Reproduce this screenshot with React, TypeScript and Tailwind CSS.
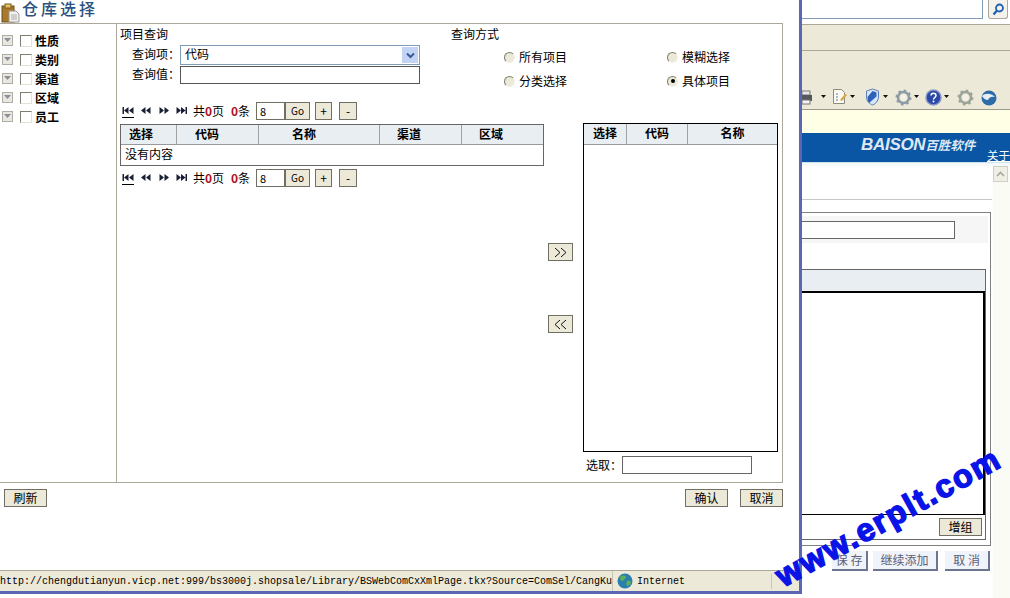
import React from "react";

const cjk = { fontFamily: '"Noto Sans CJK SC","Liberation Sans",sans-serif' };

function Btn({ children, className = "" }: { children: React.ReactNode; className?: string }) {
  return (
    <div className={`flex items-center justify-center border border-[#716f64] bg-[#ece9d8] text-[12px] leading-none text-black ${className}`}>
      {children}
    </div>
  );
}

function Tri({ d, line }: { d: string; line?: boolean }) {
  return (
    <svg width="12" height="14" viewBox="0 0 12 14" className="shrink-0">
      <path d={d} fill="#1a1f33" />
      {line && <path d="M0 13.500H12" stroke="#000" strokeWidth="1" />}
    </svg>
  );
}

function Pager() {
  return (
    <div className="flex h-[18px] items-center text-[12px] leading-none text-black">
      <div className="ml-[2px] flex w-[68px] gap-[6px]">
        <Tri line d="M0.500 3h1.500v7H0.500zM6.500 3v7L2 6.500zM11.500 3v7L7 6.500z" />
        <Tri d="M5.500 3v7L1 6.500zM10.500 3v7L6 6.500z" />
        <Tri d="M1.500 3v7L6 6.500zM6.500 3v7l4.500-3.500z" />
        <Tri d="M0.500 3v7L5 6.500zM5 3v7l4.500-3.500zM9.500 3H11v7H9.500z" />
      </div>
      <span className="ml-[3px] w-[38px] whitespace-nowrap pb-[1px]">
        共<b className="text-[#b01020]">0</b>页
      </span>
      <span className="w-[25px] whitespace-nowrap pb-[1px]">
        <b className="text-[#b01020]">0</b>条
      </span>
      <div className="flex h-[18px] w-[29px] items-center border border-[#716f64] bg-white pl-[3px] text-[11px]">8</div>
      <Btn className="h-[18px] w-[25px]"><span className="text-[10px]">Go</span></Btn>
      <Btn className="ml-[5px] h-[18px] w-[17px]">+</Btn>
      <Btn className="ml-[7px] h-[18px] w-[18px]">-</Btn>
    </div>
  );
}

function Radio({ checked, label }: { checked?: boolean; label: string }) {
  return (
    <div className="flex h-[12px] items-center gap-[4px] whitespace-nowrap text-[12px] text-black">
      <span className="flex h-[11px] w-[11px] items-center justify-center rounded-full border border-t-[#7f7d70] border-l-[#7f7d70] border-r-[#f4f2e8] border-b-[#f4f2e8] bg-[#ece9d8]">
        {checked && <span className="h-[4px] w-[4px] rounded-full bg-black" />}
      </span>
      {label}
    </div>
  );
}

function SideRow({ label }: { label: string }) {
  return (
    <div className="flex h-[19px] items-center">
      <div className="ml-[2px] flex h-[11px] w-[11px] items-center justify-center border border-[#b0aea4] bg-[#e8e8e0]">
        <svg width="7" height="5" viewBox="0 0 7 5"><path d="M0 0h7L3.500 4z" fill="#8a8f98" /></svg>
      </div>
      <div className="ml-[7px] h-[12px] w-[12px] border border-t-[#7f7d70] border-l-[#7f7d70] border-r-[#e4e2d6] border-b-[#e4e2d6] bg-white" />
      <span className="ml-[3px] text-[12px] font-bold leading-none text-black">{label}</span>
    </div>
  );
}

function HeadCell({ w, children, last, pad }: { w: string; children: string; last?: boolean; pad?: string }) {
  return (
    <div className={`flex h-full items-center pb-[2px] text-[12px] font-bold leading-none text-black ${pad ?? "justify-center"} ${w} ${last ? "" : "border-r border-[#a0a0a0]"}`}>
      {children}
    </div>
  );
}

function Gear({ color = "#8e9aa5" }: { color?: string }) {
  return (
    <svg width="17" height="17" viewBox="0 0 17 17">
      <circle cx="8.500" cy="8.500" r="5.500" fill="none" stroke={color} strokeWidth="2.500" />
      <circle cx="8.500" cy="8.500" r="7" fill="none" stroke={color} strokeWidth="2" strokeDasharray="2.500 3" />
      <circle cx="8.500" cy="8.500" r="3" fill="#f4f2e6" />
    </svg>
  );
}

function Caret() {
  return (
    <svg width="5" height="3" viewBox="0 0 5 3" className="mx-[2px]"><path d="M0 0h5L2.500 3z" fill="#111" /></svg>
  );
}

function Toolbar() {
  return (
    <div className="flex h-[59px] items-end border-b border-[#9c9a8d] bg-[#ece9d8] pb-[3px]">
      <svg width="10" height="15" viewBox="0 0 10 15" className="mb-[1px] shrink-0">
        <rect x="0" y="1" width="8" height="4" fill="#e8e8e8" stroke="#777" />
        <rect x="0" y="5" width="10" height="6" fill="#55585c" />
        <rect x="0" y="10" width="8" height="4" fill="#f4f4f4" stroke="#777" />
      </svg>
      <div className="mb-[8px] ml-[7px]"><Caret /></div>
      <svg width="16" height="17" viewBox="0 0 16 17" className="ml-[4px] mb-[1px]">
        <path d="M1.500 1.500h8l3 3v11h-11z" fill="#fbfaf0" stroke="#8a8a80" />
        <path d="M4 6h2M4 9h2M4 12h2" stroke="#5572b0" />
        <path d="M8 12l5-6 2 1-5 6z" fill="#d9a441" />
      </svg>
      <div className="mb-[8px]"><Caret /></div>
      <svg width="15" height="18" viewBox="0 0 15 18" className="ml-[8px]">
        <path d="M7.500 1l6 2v6c0 4-3 7-6 8-3-1-6-4-6-8V3z" fill="#d6e4f5" stroke="#5d7fb5" />
        <path d="M7.500 3l4 1.500v4L4 15c-1-1.500-1.500-3-1.500-6z" fill="#2e62b8" />
      </svg>
      <div className="mb-[8px] ml-[1px]"><Caret /></div>
      <div className="ml-[5px] flex"><Gear /></div>
      <div className="mb-[8px]"><Caret /></div>
      <svg width="17" height="17" viewBox="0 0 17 17" className="ml-[4px]">
        <circle cx="8.500" cy="8.500" r="7.500" fill="#2a48a8" stroke="#8796c4" strokeWidth="1.500" />
        <path d="M6 6.500c0-3 5-3 5 0 0 2-2.500 2-2.500 4" fill="none" stroke="#fff" strokeWidth="1.500" />
        <circle cx="8.500" cy="12.500" r="1" fill="#fff" />
      </svg>
      <div className="mb-[8px]"><Caret /></div>
      <div className="ml-[6px] flex"><Gear color="#9aa49a" /></div>
      <svg width="16" height="16" viewBox="0 0 16 16" className="ml-[7px]">
        <circle cx="8" cy="8" r="7.500" fill="#2c6ca8" />
        <path d="M1 6c3-3 9-3 13 1-3-1-6 0-7 3-2 0-4-1-6-4z" fill="#e8eef4" />
      </svg>
    </div>
  );
}

function BgWindow() {
  return (
    <div className="flex h-full min-w-0 flex-1 flex-col overflow-hidden bg-white" style={cjk}>
      <div className="flex h-[25px] items-start border-b border-[#aca899] bg-white">
        <div className="h-[19px] w-[181px] border-b border-r border-[#7f9db9] bg-white" />
        <div className="ml-[5px] flex h-[19px] w-[20px] items-center justify-center rounded-b-[3px] border border-t-0 border-[#a8a8a0] bg-[#f4f2ea]">
          <svg width="13" height="13" viewBox="0 0 13 13">
            <circle cx="7.500" cy="5" r="3.500" fill="none" stroke="#1d5fb0" strokeWidth="1.800" />
            <path d="M5 7.500L1.500 11.500" stroke="#1d5fb0" strokeWidth="2.200" />
          </svg>
        </div>
      </div>
      <div className="h-[26px] border-b border-[#aca899] bg-[#ece9d8]" />
      <Toolbar />
      <div className="h-[23px] bg-[#ffffe6]" />
      <div className="relative flex h-[29px] items-center bg-[#0a56a5] pb-[6px] text-white">
        <span className="ml-[59px] whitespace-nowrap font-bold italic leading-none text-[#dfe8f2]" style={{ fontFamily: '"Liberation Sans","Noto Sans CJK SC",sans-serif' }}>
          <span className="text-[17px] tracking-[-0.300px]">BAISON</span>
          <span className="text-[12.500px]">百胜软件</span>
        </span>
        <span className="absolute left-[185px] top-[15px] whitespace-nowrap text-[11.500px] leading-[14px] underline">关于</span>
      </div>
      <div className="h-[4px] border-t border-[#cfe2f0] bg-[#f4fafc]" />
      <div className="flex min-h-0 flex-1">
        <div className="flex w-[192px] flex-col">
          <div className="mt-[33px] mr-[1px] h-[1px] bg-[#c8c8c8]" />
          <div className="mr-[2px] mt-[12px] flex h-[334px] flex-col border border-l-0 border-[#808080] pr-[4px] pt-[3px]">
            <div className="mr-[-2px] flex h-[27px] items-start bg-[#f6f6f6] pt-[5px]">
              <div className="h-[18px] w-[153px] border border-l-0 border-[#666] bg-white" />
            </div>
            <div className="mt-[26px] flex h-[271px] flex-col border border-l-0 border-[#666]">
              <div className="h-[21px] shrink-0 bg-[#e9eef3]" />
              <div className="h-[224px] shrink-0 border-2 border-l-0 border-b border-black bg-white" />
              <div className="flex justify-end pr-[3px] pt-[3px]">
                <Btn className="h-[18px] w-[43px]">增组</Btn>
              </div>
            </div>
          </div>
          <div className="mr-[3px] mt-[5px] flex h-[20px] items-stretch justify-end gap-[5px] text-[12px] text-[#5a6078]">
            <div className="flex w-[36px] items-center justify-center whitespace-nowrap border-b-2 border-r-2 border-[#6d7590] bg-[#f1f3fa]">保 存</div>
            <div className="flex w-[65px] items-center justify-center whitespace-nowrap border-b-2 border-r-2 border-[#6d7590] bg-[#f1f3fa]">继续添加</div>
            <div className="ml-[2px] flex w-[45px] items-center justify-center whitespace-nowrap border-b-2 border-r-2 border-[#6d7590] bg-[#f1f3fa]">取 消</div>
          </div>
        </div>
        <div className="flex w-[17px] flex-col bg-[#fbfbf5]">
          <div className="flex h-[16px] w-[15px] items-center justify-center border border-[#cfcfc8] bg-[#f0efe6]">
            <svg width="9" height="6" viewBox="0 0 9 6"><path d="M1 5l3.500-3.500L8 5" fill="none" stroke="#a8a89e" strokeWidth="1.600" /></svg>
          </div>
        </div>
      </div>
    </div>
  );
}

function MainPanel() {
  return (
    <div className="flex h-[460px] w-[783px] border-t border-b border-[#aca899]">
      <div className="w-[117px] shrink-0 border-r border-[#aca899] pt-[7px]">
        {["性质", "类别", "渠道", "区域", "员工"].map((l) => <SideRow key={l} label={l} />)}
      </div>
      <div className="flex w-[666px] flex-col border-r border-[#aca899] text-[12px] text-black">
        <div className="flex h-[78px] shrink-0">
          <div className="w-[334px] pl-[3px]">
            <div className="h-[21px] leading-[20px]">项目查询</div>
            <div className="flex h-[21px] items-start">
              <span className="ml-[12px] w-[48px] whitespace-nowrap leading-[17px]">查询项：</span>
              <div className="flex h-[20px] w-[240px] items-center justify-between border border-[#7f9db9] bg-white pl-[4px] pr-[1px] leading-none">
                <span className="pb-[2px]">代码</span>
                <div className="flex h-[16px] w-[16px] items-center justify-center bg-[#c3d3f5]">
                  <svg width="9" height="7" viewBox="0 0 9 7"><path d="M1 1.500l3.500 3.500L8 1.500" fill="none" stroke="#3d5a9e" strokeWidth="2" /></svg>
                </div>
              </div>
            </div>
            <div className="flex h-[18px] items-start">
              <span className="ml-[12px] w-[48px] whitespace-nowrap leading-[16px]">查询值：</span>
              <div className="h-[18px] w-[240px] border border-[#555] bg-white" />
            </div>
          </div>
          <div className="flex-1">
            <div className="h-[21px] leading-[20px]">查询方式</div>
            <div className="ml-[53px] mt-[6px] grid w-[230px] grid-cols-[163px_1fr] gap-y-[12px]">
              <Radio label="所有项目" />
              <Radio label="模糊选择" />
              <Radio label="分类选择" />
              <Radio checked label="具体项目" />
            </div>
          </div>
        </div>
        <div className="flex min-h-0 flex-1 pl-[3px]">
          <div className="w-[424px] shrink-0">
            <Pager />
            <div className="mt-[4px] h-[42px] border border-[#666] bg-white">
              <div className="flex h-[20px] border-b border-[#999] bg-[#e9eef3]">
                <HeadCell w="w-[56px]" pad="pl-[8px]">选择</HeadCell>
                <HeadCell w="w-[82px]" pad="pl-[18px]">代码</HeadCell>
                <HeadCell w="w-[121px]" pad="pl-[33px]">名称</HeadCell>
                <HeadCell w="w-[82px]" pad="pl-[17px]">渠道</HeadCell>
                <HeadCell w="flex-1" pad="pl-[17px]" last>区域</HeadCell>
              </div>
              <div className="h-[20px] pl-[4px] leading-[17px]">没有内容</div>
            </div>
            <div className="mt-[3px]"><Pager /></div>
          </div>
          <div className="ml-[4px] flex w-[25px] shrink-0 flex-col pt-[141px]">
            <Btn className="h-[18px] w-[25px]">
              <svg width="15" height="11" viewBox="0 0 15 11"><path d="M2 1l5 4.500L2 10M8 1l5 4.500L8 10" fill="none" stroke="#111" /></svg>
            </Btn>
            <Btn className="mt-[54px] h-[18px] w-[25px]">
              <svg width="15" height="11" viewBox="0 0 15 11"><path d="M7 1L2 5.500 7 10M13 1L8 5.500 13 10" fill="none" stroke="#111" /></svg>
            </Btn>
          </div>
          <div className="ml-[10px] w-[195px] shrink-0 pt-[21px]">
            <div className="h-[329px] border border-black bg-white">
              <div className="flex h-[21px] border-b border-[#999] bg-[#e9eef3]">
                <HeadCell w="w-[43px]">选择</HeadCell>
                <HeadCell w="w-[61px]">代码</HeadCell>
                <HeadCell w="flex-1" last>名称</HeadCell>
              </div>
            </div>
            <div className="mt-[4px] flex h-[18px] items-center">
              <span className="ml-[3px] w-[36px] whitespace-nowrap">选取：</span>
              <div className="h-[18px] w-[130px] border border-[#666] bg-white" />
            </div>
          </div>
        </div>
      </div>
    </div>
  );
}

function Dialog() {
  return (
    <div className="flex h-[594px] w-[802px] shrink-0 flex-col border-r-[3px] border-b-[3px] border-[#5c67b4] bg-white" style={cjk}>
      <div className="flex h-[23px] items-start">
        <svg width="20" height="20" viewBox="0 0 20 20" className="ml-[1px] mt-[3px] shrink-0">
          <rect x="1" y="3" width="12" height="16" fill="#a9792a" stroke="#6e4d18" />
          <rect x="4" y="1" width="6" height="4" fill="#e4c26a" stroke="#7a5a20" />
          <path d="M8 8h7l3 3v8H8z" fill="#f2f2ee" stroke="#999" />
          <path d="M10 12h6M10 14h6M10 16h6" stroke="#aaa" />
        </svg>
        <span className="ml-[1px] whitespace-nowrap text-[16px] font-medium leading-[16px] tracking-[3px] text-[#2b527e]">仓库选择</span>
      </div>
      <MainPanel />
      <div className="flex h-[87px] w-[783px] items-start justify-between pt-[6px]">
        <Btn className="ml-[4px] h-[18px] w-[43px]">刷新</Btn>
        <div className="flex gap-[12px]">
          <Btn className="h-[18px] w-[43px]">确认</Btn>
          <Btn className="h-[18px] w-[43px]">取消</Btn>
        </div>
      </div>
      <div className="flex h-[21px] items-center border-t border-[#aca899] bg-[#ece9d8] text-[10px] text-black" style={{ fontFamily: '"Liberation Mono",monospace' }}>
        <div className="flex h-full w-[613px] shrink-0 items-center overflow-hidden whitespace-nowrap border-r border-[#c8c5b4]">
          http://chengdutianyun.vicp.net:999/bs3000j.shopsale/Library/BSWebComCxXmlPage.tkx?Source=ComSel/CangKu
        </div>
        <svg width="16" height="16" viewBox="0 0 16 16" className="ml-[4px] shrink-0">
          <circle cx="8" cy="8" r="7.500" fill="#2b7fb0" />
          <path d="M3 4c2-2 5-2 6 0 0 2-2 2-3 4-2 0-3-1-3-4zM10 8c2-1 4 0 4 2-1 2-2 3-4 3-1-2-1-3 0-5z" fill="#5fae58" />
        </svg>
        <span className="ml-[4px] w-[135px] border-r border-[#c8c5b4]">Internet</span>
      </div>
    </div>
  );
}

export default function App() {
  return (
    <div className="relative flex h-[598px] w-[1010px] overflow-hidden bg-white">
      <Dialog />
      <BgWindow />
      <div
        className="absolute left-[762px] top-[501px] whitespace-nowrap text-[32px] font-bold leading-none tracking-[2px] text-[#0a14e6] [-webkit-text-stroke:1.500px_#0a14e6]"
        style={{ fontFamily: '"Liberation Sans",sans-serif', transform: "rotate(-29deg)" }}
      >
        www.erplt.com
      </div>
    </div>
  );
}
